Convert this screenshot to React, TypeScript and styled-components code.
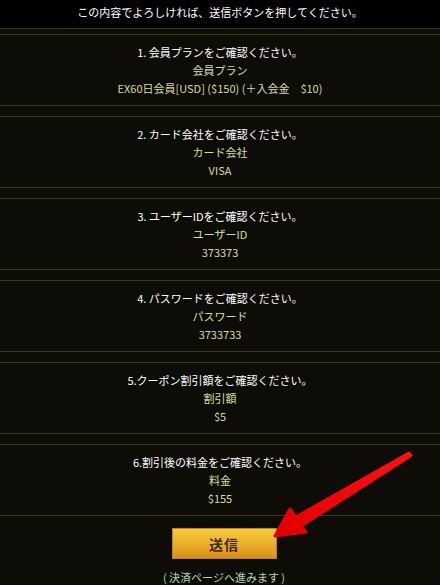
import React from 'react';
import styled, { createGlobalStyle } from 'styled-components';

const GlobalStyle = createGlobalStyle`
  html, body {
    margin: 0;
    padding: 0;
    background: #0d0c06;
  }
  body {
    font-family: "Noto Sans CJK JP", "Noto Sans", sans-serif;
    font-size: 11px;
    color: #fff;
  }
`

const Page = styled.div`
  position: relative;
  width: 440px;
  height: 585px;
  overflow: hidden;
`

const Header = styled.div`
  height: 29px;
  box-sizing: border-box;
  background: #000;
  border-bottom: 1px solid #3b3b1c;
  display: flex;
  justify-content: center;
  align-items: center;
  padding-bottom: 4px;
  color: #fff;
  line-height: 18px;
`

const List = styled.div`
  display: flex;
  flex-direction: column;
  gap: 10px;
  margin-top: 5px;
`

const Card = styled.div`
  border-top: 1px solid #3b3b1c;
  border-bottom: 1px solid #3b3b1c;
  padding: 8px 0;
  display: flex;
  flex-direction: column;
  align-items: center;
  line-height: 18px;
`

const Title = styled.div`
  color: #fff;
`

const Label = styled.div`
  color: #cfe0a0;
`

const Value = styled.div`
  color: #d6dca2;
`

const Footer = styled.div`
  display: flex;
  flex-direction: column;
  align-items: center;
  padding: 12px 0 0 8px;
  gap: 9px;
`

const SubmitButton = styled.button`
  width: 105px;
  height: 31px;
  border: 1px solid #b9801c;
  background: linear-gradient(to bottom, #f7c93c 0%, #eab12c 50%, #d98f18 100%);
  color: #3a2b12;
  font-family: inherit;
  font-size: 14px;
  font-weight: bold;
  letter-spacing: 1px;
  cursor: pointer;
`

const Note = styled.div`
  color: #b0d8b0;
  line-height: 18px;
`

const ArrowLayer = styled.svg`
  position: absolute;
  left: 0;
  top: 0;
  pointer-events: none;
`

const items = [
  { title: '1. 会員プランをご確認ください。', label: '会員プラン', value: 'EX60日会員[USD] ($150) (＋入会金　$10)' },
  { title: '2. カード会社をご確認ください。', label: 'カード会社', value: 'VISA' },
  { title: '3. ユーザーIDをご確認ください。', label: 'ユーザーID', value: '373373' },
  { title: '4. パスワードをご確認ください。', label: 'パスワード', value: '3733733' },
  { title: '5.クーポン割引額をご確認ください。', label: '割引額', value: '$5' },
  { title: '6.割引後の料金をご確認ください。', label: '料金', value: '$155' },
];

const App = () => {
  return (
    <Page>
      <GlobalStyle />
      <Header>この内容でよろしければ、送信ボタンを押してください。</Header>
      <List>
        {items.map((item) => (
          <Card key={item.title}>
            <Title>{item.title}</Title>
            <Label>{item.label}</Label>
            <Value>{item.value}</Value>
          </Card>
        ))}
      </List>
      <Footer>
        <SubmitButton type="button">送信</SubmitButton>
        <Note>( 決済ページへ進みます )</Note>
      </Footer>
      <ArrowLayer width="440" height="585" viewBox="0 0 440 585">
        <defs>
          <linearGradient id="arrowRed" x1="0" y1="1" x2="1" y2="0">
            <stop offset="0" stopColor="#e00000" />
            <stop offset="1" stopColor="#ff1010" />
          </linearGradient>
        </defs>
        <polygon
          points="275,536 290,509 296,517 409,453 411,455.5 301,526 306,532"
          fill="url(#arrowRed)"
          stroke="url(#arrowRed)"
          strokeWidth="3"
          strokeLinejoin="round"
        />
      </ArrowLayer>
    </Page>
  );
};

export default App;
